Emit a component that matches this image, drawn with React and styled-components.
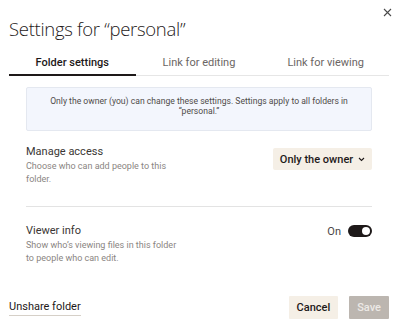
import styled, { createGlobalStyle } from "styled-components";

const GlobalStyle = createGlobalStyle`
  html, body {
    margin: 0;
    padding: 0;
    background: #ffffff;
  }
  body {
    font-family: Roboto, "Liberation Sans", sans-serif;
    color: #1e1919;
  }
`;

const tabs = ["Folder settings", "Link for editing", "Link for viewing"];

export default function App() {
  return (
    <>
      <GlobalStyle />
      <Dialog>
        <CloseButton aria-label="Close">
          <svg width="9" height="9" viewBox="0 0 9 9">
            <path
              d="M1 1 L8 8 M8 1 L1 8"
              stroke="#4a4a4a"
              strokeWidth="1.1"
              fill="none"
            />
          </svg>
        </CloseButton>
        <Title>Settings for “personal”</Title>

        <TabList>
          {tabs.map((t, i) => (
            <Tab key={t} active={i === 0}>
              {t}
            </Tab>
          ))}
        </TabList>

        <Content>
          <Notice>
            Only the owner (you) can change these settings. Settings apply to
            all folders in “personal.”
          </Notice>

          <SettingRow>
            <SettingText>
              <Label>Manage access</Label>
              <Hint>Choose who can add people to this folder.</Hint>
            </SettingText>
            <Dropdown>
              Only the owner
              <svg width="7" height="5" viewBox="0 0 7 5">
                <path
                  d="M1 1 L3.5 3.5 L6 1"
                  stroke="#1e1919"
                  strokeWidth="1.1"
                  fill="none"
                />
              </svg>
            </Dropdown>
          </SettingRow>

          <Divider />

          <SettingRow>
            <SettingText>
              <Label>Viewer info</Label>
              <Hint>Show who’s viewing files in this folder to people who can edit.</Hint>
            </SettingText>
            <ToggleWrap>
              <ToggleLabel>On</ToggleLabel>
              <Switch on>
                <Knob />
              </Switch>
            </ToggleWrap>
          </SettingRow>
        </Content>

        <Footer>
          <LinkButton>Unshare folder</LinkButton>
          <Actions>
            <Button>Cancel</Button>
            <Button primary disabled>
              Save
            </Button>
          </Actions>
        </Footer>
      </Dialog>
    </>
  );
}

const Dialog = styled.div`
  width: 400px;
  height: 329px;
  box-sizing: border-box;
  padding: 8px 11px 0 9px;
  display: flex;
  flex-direction: column;
`;

const CloseButton = styled.button`
  align-self: flex-end;
  margin-right: -3px;
  width: 9px;
  height: 9px;
  padding: 0;
  border: none;
  background: none;
  display: flex;
`;

const Title = styled.h1`
  margin: 0;
  font-family: "Open Sans", sans-serif;
  font-weight: 300;
  font-size: 18.5px;
  line-height: 24px;
  color: #1e1919;
  letter-spacing: -0.3px;
`;

const TabList = styled.div`
  margin-top: 9px;
  display: grid;
  grid-template-columns: repeat(3, 1fr);
  border-bottom: 1px solid #e6e6e6;
`;

const Tab = styled.div`
  height: 24px;
  display: flex;
  align-items: center;
  justify-content: center;
  font-size: 11px;
  font-weight: ${(p) => (p.active ? 500 : 400)};
  color: ${(p) => (p.active ? "#1e1919" : "#6b6664")};
  border-bottom: 2px solid ${(p) => (p.active ? "#1e1919" : "transparent")};
  margin-bottom: -1px;
`;

const Content = styled.div`
  padding: 0 17px;
  display: flex;
  flex-direction: column;
`;

const Notice = styled.div`
  margin-top: 11px;
  height: 44px;
  box-sizing: border-box;
  padding: 8px 18px 0;
  background: #f3f6fd;
  border: 1px solid #e4e8f0;
  border-radius: 2px;
  font-size: 8.6px;
  line-height: 10px;
  color: #4f4b49;
  text-align: center;
`;

const SettingRow = styled.div`
  margin-top: 14px;
  display: flex;
  justify-content: space-between;
  align-items: flex-start;
`;

const SettingText = styled.div`
  display: flex;
  flex-direction: column;
`;

const Label = styled.div`
  font-size: 11px;
  line-height: 14px;
  color: #3a3634;
`;

const Hint = styled.div`
  margin-top: 1px;
  max-width: 155px;
  font-size: 9px;
  line-height: 13px;
  color: #8a8582;
`;

const Dropdown = styled.button`
  margin-top: 3px;
  width: 99px;
  height: 22px;
  border: none;
  border-radius: 2px;
  background: #f5efe6;
  display: flex;
  align-items: center;
  justify-content: center;
  gap: 5px;
  font-family: Roboto, sans-serif;
  font-size: 11px;
  font-weight: 500;
  color: #1e1919;
  padding: 0;
`;

const Divider = styled.hr`
  margin: 20px 0 3px;
  border: none;
  border-top: 1px solid #e3e3e3;
`;

const ToggleWrap = styled.div`
  display: flex;
  align-items: center;
  gap: 7px;
  height: 14px;
`;

const ToggleLabel = styled.span`
  font-size: 11px;
  color: #4a4645;
`;

const Switch = styled.div`
  width: 24px;
  height: 12px;
  border-radius: 6px;
  background: ${(p) => (p.on ? "#1e1919" : "#c8c3be")};
  display: flex;
  align-items: center;
  justify-content: ${(p) => (p.on ? "flex-end" : "flex-start")};
  padding: 0 2px;
  box-sizing: border-box;
`;

const Knob = styled.div`
  width: 8px;
  height: 8px;
  border-radius: 50%;
  background: #ffffff;
`;

const Footer = styled.div`
  margin-top: 31px;
  display: flex;
  justify-content: space-between;
  align-items: center;
`;

const LinkButton = styled.button`
  padding: 0 0 1px;
  border: none;
  background: none;
  border-bottom: 1px solid #d6d0c8;
  font-family: Roboto, sans-serif;
  font-size: 11px;
  color: #1e1919;
  line-height: 14px;
`;

const Actions = styled.div`
  display: flex;
  gap: 11px;
`;

const Button = styled.button`
  height: 23px;
  padding: 0 8px;
  border: none;
  border-radius: 1px;
  font-family: Roboto, sans-serif;
  font-size: 11px;
  font-weight: 500;
  background: ${(p) => (p.primary ? "#bcb6b0" : "#f5efe6")};
  color: ${(p) => (p.primary ? "#ece9e6" : "#1e1919")};
`;
